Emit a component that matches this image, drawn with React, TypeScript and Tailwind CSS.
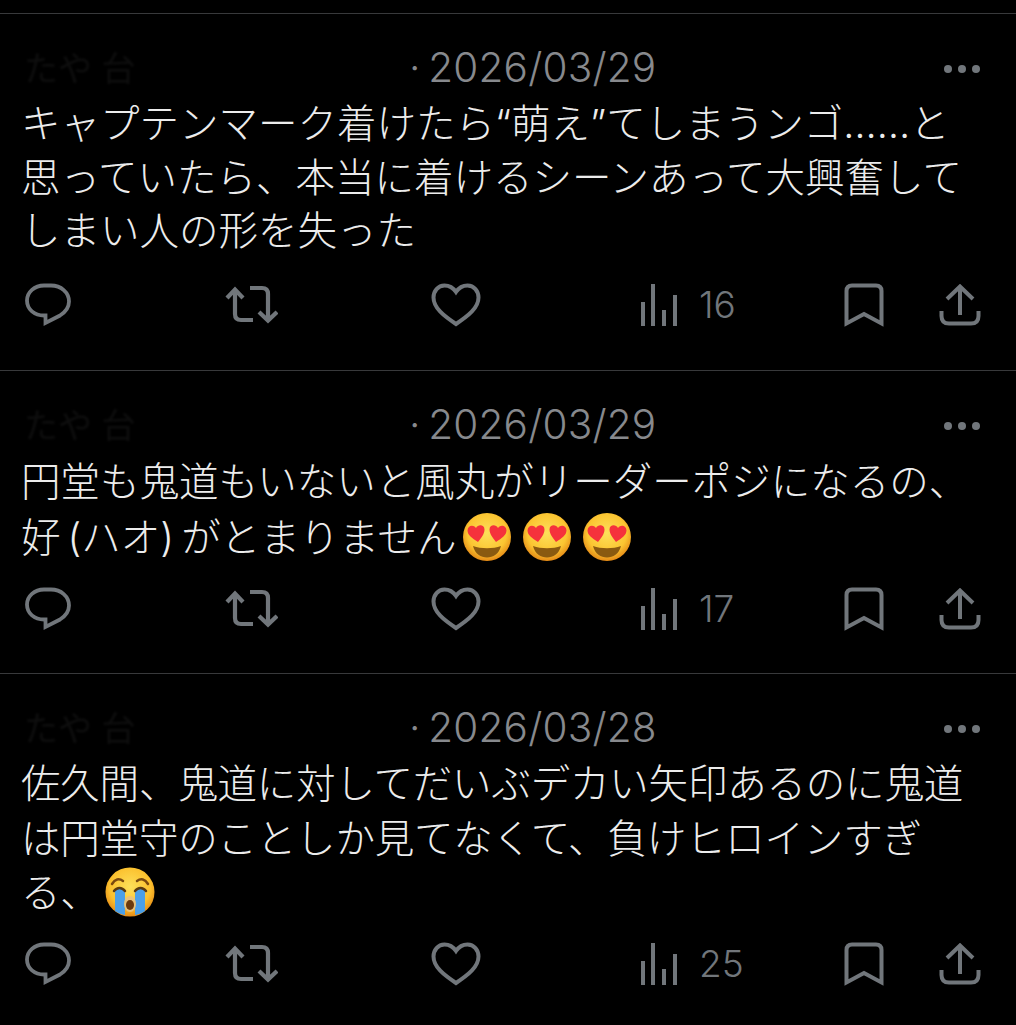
import React from 'react';

const GREY = '#71767b';

const ReplyIcon = () => (
  <svg width="48" height="48" viewBox="0 0 48 48" fill="none" stroke={GREY} strokeWidth="3.8">
    <path d="M20 4.500H27C37 4.500 45 11.500 45 20.500C45 27 41.500 31 36 34.500L21.500 42V34.500H20C10.500 34.500 3 28.500 3 19.500C3 11 10.500 4.500 20 4.500Z" strokeLinejoin="miter" />
  </svg>
);

const RetweetIcon = () => (
  <svg width="54" height="40" viewBox="0 0 54 40" fill="none" stroke={GREY} strokeWidth="4.2">
    <path d="M3 13L11 4.500L19 13M11 5V29C11 33 13 35 17 35H29" />
    <path d="M26 3H38C42 3 44 5 44 9V34M35 27L44 35.500L53 27" />
  </svg>
);

const HeartIcon = () => (
  <svg width="50" height="44" viewBox="0 0 50 44" fill="none" stroke={GREY} strokeWidth="4">
    <path d="M25 9C22 4.500 18 2.500 13.500 2.500C7 2.500 2.500 8 2.500 14.500C2.500 25 13 33 25 41C37 33 47.500 25 47.500 14.500C47.500 8 43 2.500 36.500 2.500C32 2.500 28 4.500 25 9Z" strokeLinejoin="miter" />
  </svg>
);

const ViewsIcon = () => (
  <svg width="38" height="42" viewBox="0 0 38 42" fill={GREY}>
    <rect x="1" y="18" width="4" height="24" />
    <rect x="11" y="0" width="4" height="42" />
    <rect x="22" y="26" width="4" height="16" />
    <rect x="33" y="11" width="4" height="31" />
  </svg>
);

const BookmarkIcon = () => (
  <svg width="40" height="44" viewBox="0 0 40 44" fill="none" stroke={GREY} strokeWidth="4">
    <path d="M2.500 40.500V8C2.500 4.500 4.500 2.500 8 2.500H32C35.500 2.500 37.500 4.500 37.500 8V40.500L20 31L2.500 40.500Z" />
  </svg>
);

const ShareIcon = () => (
  <svg width="42" height="42" viewBox="0 0 42 42" fill="none" stroke={GREY} strokeWidth="4">
    <path d="M21 3V31M8 15L21 2.500L34 15" />
    <path d="M2.500 27V32C2.500 37 5 39.500 10 39.500H32C37 39.500 39.500 37 39.500 32V27" />
  </svg>
);

const HeartEyes = () => (
  <svg width="48" height="48" viewBox="0 0 48 48" className="inline-block align-[-11px]">
    <defs>
      <radialGradient id="face" cx="50%" cy="42%" r="58%">
        <stop offset="0%" stopColor="#fde05a" />
        <stop offset="70%" stopColor="#fbc531" />
        <stop offset="100%" stopColor="#e58a16" />
      </radialGradient>
    </defs>
    <circle cx="24" cy="24" r="24" fill="url(#face)" />
    <path d="M10 33C18 36 30 36 38 33C36 41 30 44.500 24 44.500C18 44.500 12 41 10 33Z" fill="#8a5a10" />
    <path d="M15 29C9 25 4.500 22 4.500 17.500C4.500 13 10 11 13 15C15 11 21.500 11.500 21.500 16.500C21.500 21 18 25 15 29Z" fill="#f5323c" />
    <path d="M33 29C39 25 43.500 22 43.500 17.500C43.500 13 38 11 35 15C33 11 26.500 11.500 26.500 16.500C26.500 21 30 25 33 29Z" fill="#f5323c" />
  </svg>
);

const Sob = () => (
  <svg width="50" height="50" viewBox="0 0 50 50" className="inline-block align-[-10px]">
    <defs>
      <radialGradient id="sobface" cx="50%" cy="40%" r="60%">
        <stop offset="0%" stopColor="#fde05a" />
        <stop offset="70%" stopColor="#fbc02d" />
        <stop offset="100%" stopColor="#e58a16" />
      </radialGradient>
    </defs>
    <circle cx="25" cy="25" r="24.500" fill="url(#sobface)" />
    <path d="M10 23V44C13 46.500 17 47.500 20 48V23C17 21 13 21 10 23Z" fill="#4a9fe8" />
    <path d="M30 23V48C33 47.500 37 46.500 40 44V23C37 21 33 21 30 23Z" fill="#4a9fe8" />
    <path d="M7 17C10 12 14 11 18 14M32 14C36 11 40 12 43 17" fill="none" stroke="#7a4a10" strokeWidth="2.500" strokeLinecap="round" />
    <path d="M9 24C12 20 17 20 20 24M30 24C33 20 38 20 41 24" fill="none" stroke="#5a3a10" strokeWidth="2.500" strokeLinecap="round" />
    <ellipse cx="25" cy="37" rx="6" ry="8" fill="#e8c27a" />
    <ellipse cx="25" cy="38" rx="4" ry="5" fill="#6b3a0c" />
  </svg>
);

const ActionBar = ({ count }: { count: string }) => (
  <div className="flex items-center h-12 pl-[24px]">
    <div className="w-[200px]"><ReplyIcon /></div>
    <div className="w-[207px]"><RetweetIcon /></div>
    <div className="w-[209px]"><HeartIcon /></div>
    <div className="w-[204px] flex items-center gap-[21px]">
      <ViewsIcon />
      <span className="text-[37px] font-light text-[#71767b]">{count}</span>
    </div>
    <div className="w-[95px]"><BookmarkIcon /></div>
    <ShareIcon />
  </div>
);

const Header = ({ name, date }: { name: string; date: string }) => (
  <div className="flex items-center h-10 pl-[24px] pr-[36px]">
    <span className="w-[385px] text-[34px] text-[#0e0e0e] blur-[1px]">{name}</span>
    <span className="text-[40.5px] font-light text-[#87898d] tracking-[0.2px] [word-spacing:-4px]">· {date}</span>
    <div className="ml-auto flex gap-[6px] translate-y-[1px]">
      <span className="w-[8px] h-[8px] rounded-full bg-[#71767b]" />
      <span className="w-[8px] h-[8px] rounded-full bg-[#71767b]" />
      <span className="w-[8px] h-[8px] rounded-full bg-[#71767b]" />
    </div>
  </div>
);

export default function App() {
  return (
    <div
      className="w-[1016px] h-[1025px] bg-black overflow-hidden pt-[13px]"
      style={{ fontFamily: 'Inter, "Noto Sans CJK JP", sans-serif' }}
    >
      {/* first tweet */}
      <div className="border-t border-[#38393b] pt-[34px] h-[357px]">
        <Header name="たや 台" date="2026/03/29" />
        <p className="mt-[10px] pl-[21px] text-[39.5px] leading-[53.5px] text-[#ececec] whitespace-nowrap font-light">
          キャプテンマーク着けたら“萌え”てしまうンゴ……と<br />
          思っていたら、本当に着けるシーンあって大興奮して<br />
          しまい人の形を失った
        </p>
        <div className="mt-[22px]"><ActionBar count="16" /></div>
      </div>

      {/* second tweet */}
      <div className="border-t border-[#38393b] pt-[34px] h-[303px]">
        <Header name="たや 台" date="2026/03/29" />
        <p className="mt-[9px] pl-[21px] text-[39.5px] leading-[56px] text-[#ececec] whitespace-nowrap font-light">
          円堂も鬼道もいないと風丸がリーダーポジになるの、<br />
          <span className="[word-spacing:-4px]">好 (ハオ) がとまりません</span>
          <span className="inline-flex gap-[12px] ml-[6px] align-[-9px]">
            <HeartEyes /><HeartEyes /><HeartEyes />
          </span>
        </p>
        <div className="mt-[19px]"><ActionBar count="17" /></div>
      </div>

      {/* third tweet */}
      <div className="border-t border-[#38393b] pt-[34px]">
        <Header name="たや 台" date="2026/03/28" />
        <p className="mt-[9px] pl-[21px] text-[39.5px] leading-[54.5px] text-[#ececec] whitespace-nowrap font-light tracking-[-0.2px]">
          佐久間、鬼道に対してだいぶデカい矢印あるのに鬼道<br />
          は円堂守のことしか見てなくて、負けヒロインすぎ<br />
          る、<span className="ml-[5px]"><Sob /></span>
        </p>
        <div className="mt-[19px]"><ActionBar count="25" /></div>
      </div>
    </div>
  );
}
